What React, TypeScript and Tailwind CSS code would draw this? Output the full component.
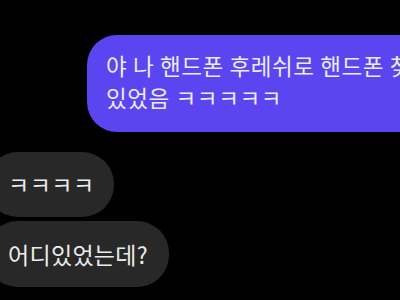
// Chat screenshot — one sent message, two received replies

const font = { fontFamily: '"Noto Sans CJK KR", "Noto Sans", sans-serif' };

export default function App() {
  return (
    <div
      className="h-[300px] w-[400px] overflow-hidden bg-black text-[#ececec]"
      style={font}
    >
      {/* Sent message (runs off the right edge) */}
      <div className="flex pt-[35px] pl-[87px]">
        <div className="w-[440px] shrink-0 rounded-[30px] bg-[#5a45f1] pt-[14px] pb-[19px] pl-[19px] text-[22.5px] leading-[32px] tracking-[0.6px] whitespace-nowrap">
          야 나 핸드폰 후레쉬로 핸드폰 찾고
          <br />
          있었음 ㅋㅋㅋㅋㅋ
        </div>
      </div>

      {/* Received messages */}
      <div className="mt-[20px] flex flex-col items-start gap-[4px] -ml-[14px]">
        <div className="flex h-[65px] items-center rounded-[32px] bg-[#282828] pl-[22px] pr-[19px] text-[23px] tracking-[0.5px]">
          ㅋㅋㅋㅋ
        </div>
        <div className="flex h-[66px] items-center rounded-[32px] bg-[#282828] pl-[22px] pr-[21px] text-[23px] tracking-[0.3px]">
          어디있었는데?
        </div>
      </div>
    </div>
  );
}
